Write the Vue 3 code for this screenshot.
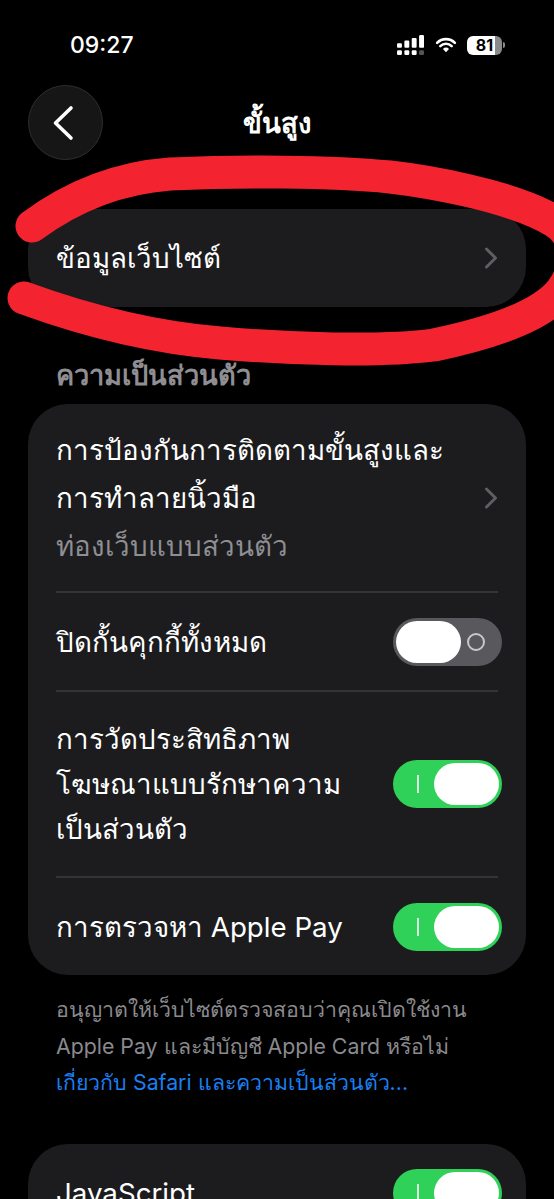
<template>
	<div class="screen">
		<!-- status bar -->
		<div class="status-bar">
			<span class="time">09:27</span>
			<span class="status-icons">
				<svg class="signal" width="27" height="20" viewBox="0 0 24.2 19.6" preserveAspectRatio="none">
					<g fill="#fff">
						<rect x="0" y="8" width="4.4" height="4.6" rx="1" />
						<rect x="6.6" y="5.5" width="4.4" height="7.1" rx="1" />
						<rect x="13.2" y="3" width="4.4" height="9.6" rx="1" />
						<rect x="19.8" y="0" width="4.4" height="12.6" rx="1.2" />
						<rect x="0" y="15" width="4.4" height="4.6" rx="1.2" />
						<rect x="6.6" y="15" width="4.4" height="4.6" rx="1.2" />
						<rect x="13.2" y="15" width="4.4" height="4.6" rx="1.2" />
					</g>
					<rect x="19.8" y="15" width="4.4" height="4.6" rx="1.2" fill="#555" />
				</svg>
				<svg class="wifi" width="22" height="16" viewBox="0 0 24 18">
					<path d="M2 6.6a14 14 0 0 1 20 0M5.6 10.3a9 9 0 0 1 12.8 0" fill="none" stroke="#fff" stroke-width="2.9" stroke-linecap="round" />
					<path d="M8.6 13.4a4.6 4.6 0 0 1 6.8 0L12 17.2z" fill="#fff" />
				</svg>
				<span class="battery">
					<span class="battery-body">81</span>
					<span class="battery-tip"></span>
				</span>
			</span>
		</div>

		<!-- nav -->
		<div class="nav">
			<button class="back">
				<svg width="22" height="36" viewBox="0 0 22 36">
					<path d="M19 3 3.5 18 19 33" fill="none" stroke="#fff" stroke-width="3.6" stroke-linecap="round" stroke-linejoin="round" />
				</svg>
			</button>
			<span class="title">ขั้นสูง</span>
		</div>

		<!-- website data -->
		<div class="card">
			<div class="row single">
				<span class="label">ข้อมูลเว็บไซต์</span>
				<svg class="chevron" width="14" height="22" viewBox="0 0 14 22">
					<path d="M2.5 2 11.5 11 2.5 20" fill="none" stroke="#5f5f63" stroke-width="3" stroke-linecap="round" stroke-linejoin="round" />
				</svg>
			</div>
		</div>

		<div class="section-title">ความเป็นส่วนตัว</div>

		<div class="card privacy">
			<div class="row tracking">
				<div class="text-col">
					<div class="label">การป้องกันการติดตามขั้นสูงและ<br />การทำลายนิ้วมือ</div>
					<div class="label sub">ท่องเว็บแบบส่วนตัว</div>
				</div>
				<svg class="chevron" width="14" height="22" viewBox="0 0 14 22">
					<path d="M2.5 2 11.5 11 2.5 20" fill="none" stroke="#5f5f63" stroke-width="3" stroke-linecap="round" stroke-linejoin="round" />
				</svg>
			</div>
			<div v-for="item in toggles" :key="item.text" class="row" :class="item.cls">
				<span class="label" v-html="item.text"></span>
				<span class="toggle" :class="{ on: item.on }">
					<span v-if="item.on" class="mark-on"></span>
					<span class="knob"></span>
					<span v-if="!item.on" class="mark-off"></span>
				</span>
			</div>
		</div>

		<p class="footnote">
			อนุญาตให้เว็บไซต์ตรวจสอบว่าคุณเปิดใช้งาน<br />
			Apple Pay และมีบัญชี Apple Card หรือไม่<br />
			<span class="link">เกี่ยวกับ Safari และความเป็นส่วนตัว...</span>
		</p>

		<div class="card last">
			<div class="row single">
				<span class="label">JavaScript</span>
				<span class="toggle on"><span class="mark-on"></span><span class="knob"></span></span>
			</div>
		</div>

		<!-- red marker scribble on top of the screenshot -->
		<svg class="scribble" width="554" height="400" viewBox="0 0 554 400">
			<path
				d="M32 226C70 198 115 178 170 174C240 171 330 171 390 177C425 181 510 195 554 221C575 233 582 262 562 290C545 312 505 330 434 345C380 352 290 349 220 343C160 338 90 322 24 298"
				fill="none"
				stroke="#f32430"
				stroke-width="33"
				stroke-linecap="round"
				stroke-linejoin="round" />
		</svg>
	</div>
</template>

<script setup>
	const toggles = [
		{ text: "ปิดกั้นคุกกี้ทั้งหมด", on: false, cls: "h-99" },
		{
			text: "การวัดประสิทธิภาพ<br>โฆษณาแบบรักษาความ<br>เป็นส่วนตัว",
			on: true,
			cls: "h-186"
		},
		{ text: "การตรวจหา Apple Pay", on: true, cls: "h-99" }
	];
</script>

<style>
	html,
	body {
		background: #000;
	}
</style>

<style scoped>
	.screen {
		position: relative;
		width: 554px;
		height: 1199px;
		overflow: hidden;
		background: #000;
		color: #fff;
		font-family: "Inter", "Noto Sans", "Noto Sans CJK SC", sans-serif;
	}

	.status-bar {
		display: flex;
		justify-content: space-between;
		align-items: center;
		height: 30px;
		padding: 30px 49px 0 70px;
	}

	.time {
		font-size: 23px;
		font-weight: 500;
	}

	.status-icons {
		display: flex;
		align-items: center;
		gap: 10.5px;
	}

	.battery {
		display: flex;
		align-items: center;
		gap: 1px;
	}

	.battery-body {
		width: 35px;
		height: 19px;
		border-radius: 6px;
		background: linear-gradient(90deg, #fff 80%, #8a8a8a 80%);
		color: #000;
		font-size: 16px;
		font-weight: 700;
		line-height: 19px;
		text-align: center;
	}

	.battery-tip {
		width: 2px;
		height: 6px;
		border-radius: 0 2px 2px 0;
		background: #8a8a8a;
	}

	.nav {
		position: relative;
		display: flex;
		align-items: center;
		justify-content: center;
		height: 75px;
		margin-top: 25px;
		margin-bottom: 49px;
	}

	.back {
		position: absolute;
		left: 28px;
		top: 0;
		display: flex;
		align-items: center;
		justify-content: center;
		box-sizing: border-box;
		width: 75px;
		height: 75px;
		padding: 0 5px 0 0;
		border: 1px solid #2e2e2e;
		border-radius: 50%;
		background: #161616;
	}

	.title {
		font-size: 27.5px;
		font-weight: 600;
	}

	.card {
		margin: 0 28px;
		border-radius: 40px;
		background: #1c1c1e;
	}

	.row {
		display: flex;
		align-items: center;
		justify-content: space-between;
		margin: 0 28px;
		box-sizing: border-box;
	}

	.row + .row {
		border-top: 2px solid #343436;
	}

	.single {
		height: 98px;
	}

	.tracking {
		height: 187px;
	}

	.h-99 {
		height: 99px;
	}

	.h-186 {
		height: 186px;
	}

	.label {
		font-size: 27.7px;
		line-height: 48px;
	}

	.h-186 .label {
		line-height: 45px;
	}

	.sub {
		color: #8e8e93;
	}

	.chevron {
		flex: none;
	}

	.section-title {
		height: 30px;
		margin: 54px 56px 13px;
		color: #8e8e93;
		font-size: 27.2px;
		font-weight: 600;
		line-height: 30px;
	}

	.toggle {
		position: relative;
		display: flex;
		align-items: center;
		flex: none;
		box-sizing: border-box;
		width: 109px;
		height: 48px;
		margin-right: -4px;
		padding: 3px;
		border-radius: 24px;
		background: #58585d;
	}

	.toggle.on {
		justify-content: flex-end;
		background: #30d158;
	}

	.knob {
		width: 65px;
		height: 42px;
		border-radius: 21px;
		background: #fff;
	}

	.mark-on {
		position: absolute;
		left: 24px;
		top: 15px;
		width: 2px;
		height: 18px;
		background: #d8f5df;
	}

	.mark-off {
		position: absolute;
		right: 17px;
		top: 15px;
		box-sizing: border-box;
		width: 18px;
		height: 18px;
		border: 2px solid #c8c8cc;
		border-radius: 50%;
	}

	.footnote {
		margin: 16px 56px 0;
		color: #8a8a8e;
		font-size: 21.3px;
		line-height: 36.5px;
		white-space: nowrap;
	}

	.link {
		color: #1a7ff0;
	}

	.last {
		margin-top: 43px;
	}

	.scribble {
		position: absolute;
		left: 0;
		top: 0;
		pointer-events: none;
	}
</style>
